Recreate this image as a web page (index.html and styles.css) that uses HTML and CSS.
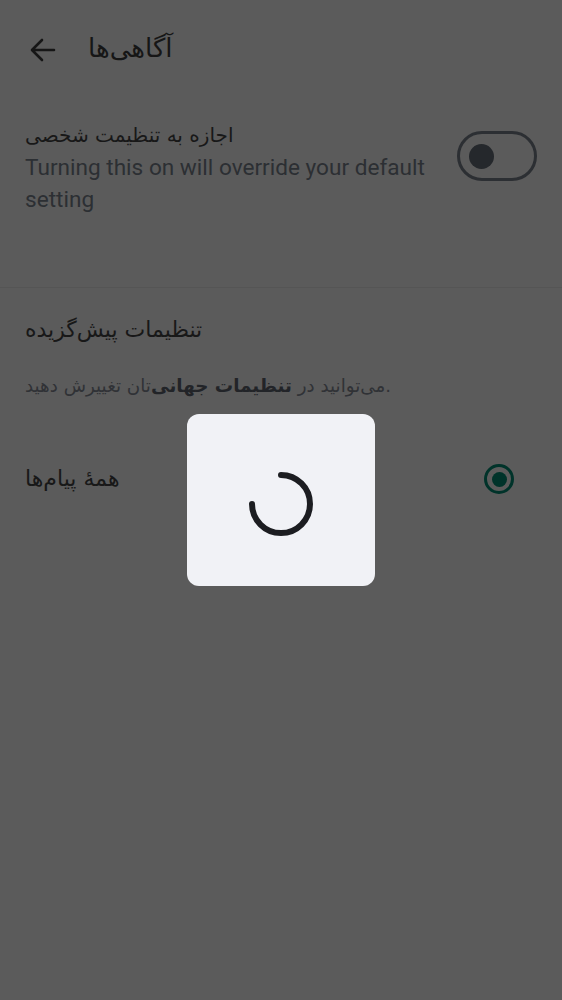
FILE: index.html
```html
<!DOCTYPE html>
<html lang="fa">
<head>
<meta charset="utf-8">
<link rel="stylesheet" href="styles.css">
</head>
<body>
<div class="page" dir="ltr">
  <header class="topbar">
    <svg class="back" width="26" height="24" viewBox="0 0 26 24"><path d="M24 12H3M12 2L2 12l10 10" fill="none" stroke="#161616" stroke-width="2.6" stroke-linecap="round" stroke-linejoin="round"/></svg>
    <h1 class="title">آگاهی‌ها</h1>
  </header>
  <section class="row override">
    <div class="texts">
      <div class="item-title">اجازه به تنظیمت شخصی</div>
      <div class="item-sub">Turning this on will override your default setting</div>
    </div>
    <div class="toggle"><span class="thumb"></span></div>
  </section>
  <div class="divider"></div>
  <section class="defaults">
    <div class="heading">تنظیمات پیش‌گزیده</div>
    <p class="desc">می‌توانید در <b class="strong">تنظیمات جهانی‌</b>تان تغییرش دهید.</p>
    <div class="row option">
      <div class="heading">همهٔ پیام‌ها</div>
      <span class="radio"><span class="dot"></span></span>
    </div>
  </section>
</div>
<div class="dialog">
  <svg width="66" height="66" viewBox="0 0 66 66"><path d="M33 4 A29 29 0 1 1 4 33" fill="none" stroke="#1c1d21" stroke-width="6" stroke-linecap="round"/></svg>
</div>
</body>
</html>
```
FILE: styles.css
```css
html, body {
  margin: 0;
  padding: 0;
  background: #5b5b5b;
}
body {
  font-family: Roboto, "DejaVu Sans", sans-serif;
  color: #171717;
  width: 562px;
  height: 1000px;
  overflow: hidden;
}
.page {
  direction: ltr;
}
.topbar {
  height: 100px;
  display: flex;
  align-items: center;
  padding-left: 30px;
  gap: 32px;
}
.back { display: block; }
.title {
  margin: 0;
  font-family: "DejaVu Sans", sans-serif;
  font-size: 26px;
  font-weight: normal;
  color: #161616;
  line-height: 1;
  padding-bottom: 4px;
}
.row {
  display: flex;
  justify-content: space-between;
}
.override {
  padding: 20px 25px 0 25px;
  height: 187px;
  box-sizing: border-box;
}
.item-title {
  font-family: "DejaVu Sans", sans-serif;
  font-size: 20px;
  line-height: 30px;
  color: #181818;
}
.heading {
  font-family: "DejaVu Sans", sans-serif;
  font-size: 22px;
  line-height: 30px;
  color: #181818;
}
.item-sub {
  font-family: Roboto, sans-serif;
  font-size: 22.6px;
  line-height: 32px;
  color: #2c2f33;
  width: 420px;
  margin-top: 2px;
}
.toggle {
  width: 80px;
  height: 50px;
  box-sizing: border-box;
  border: 3px solid #2c2f33;
  border-radius: 25px;
  margin-top: 11px;
  display: flex;
  align-items: center;
  padding-left: 9px;
}
.thumb {
  width: 25px;
  height: 25px;
  border-radius: 50%;
  background: #25282c;
}
.divider {
  height: 1px;
  background: #555555;
}
.defaults {
  padding: 27px 25px 0 25px;
}
.desc {
  margin: 26px 0 0 0;
  font-family: "DejaVu Sans", sans-serif;
  font-size: 18.3px;
  line-height: 30px;
  color: #303236;
}
.strong {
  display: inline-block;
  color: #222428;
  font-weight: 600;
}
.option {
  margin-top: 63px;
  align-items: center;
  padding-right: 23px;
}
.radio {
  width: 30px;
  height: 30px;
  box-sizing: border-box;
  border: 3px solid #00332a;
  border-radius: 50%;
  display: flex;
  align-items: center;
  justify-content: center;
}
.dot {
  width: 15px;
  height: 15px;
  border-radius: 50%;
  background: #00332a;
}
.dialog {
  position: fixed;
  left: 187px;
  top: 414px;
  width: 188px;
  height: 172px;
  background: #f1f2f6;
  border-radius: 12px;
  display: flex;
  align-items: center;
  justify-content: center;
}
.dialog svg { display: block; margin-top: 8px; }
```
